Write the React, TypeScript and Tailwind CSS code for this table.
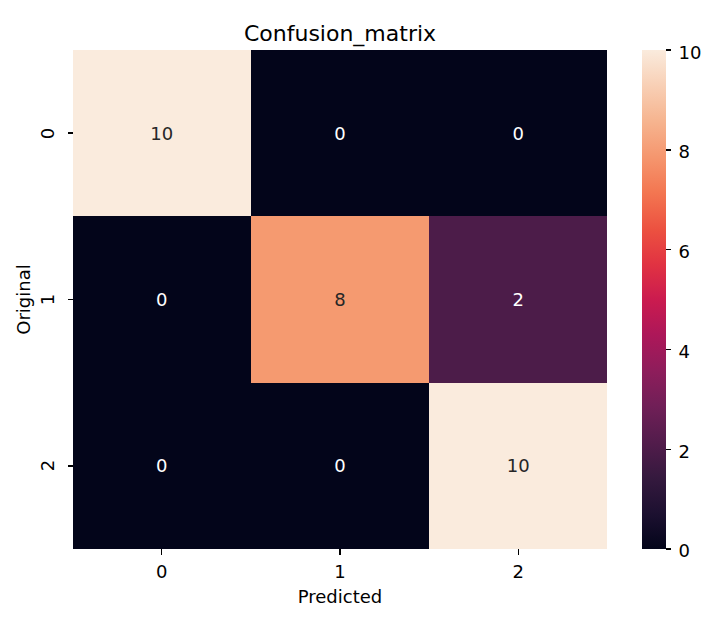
const matrix = [
  [10, 0, 0],
  [0, 8, 2],
  [0, 0, 10],
];

// rocket colormap, sampled
const cellStyle: Record<number, string> = {
  0: 'bg-[#03051a] text-white',
  2: 'bg-[#4c1c49] text-white',
  8: 'bg-[#f59a70] text-[#262626]',
  10: 'bg-[#faebdd] text-[#262626]',
};

const cbarTicks = ['10', '8', '6', '4', '2', '0'];

export default function App() {
  return (
    <div className="w-[713px] h-[618px] bg-white text-black font-['DejaVu_Sans',sans-serif] overflow-hidden">
      {/* Title */}
      <div className="h-[50px] pl-[72.5px]">
        <div className="w-[535px] pt-[21px] text-center text-[22px] leading-[26px]">Confusion_matrix</div>
      </div>

      {/* Main row */}
      <div className="flex h-[499px]">
        {/* y label + ticks */}
        <div className="flex w-[72.5px] shrink-0">
          <div className="w-[34px] pl-[12px] flex items-center justify-center">
            <span className="-rotate-90 whitespace-nowrap text-[18px] leading-[21px]">Original</span>
          </div>
          <div className="w-[28px] grid grid-rows-3">
            {['0', '1', '2'].map((t) => (
              <div key={t} className="flex items-center justify-center">
                <span className="-rotate-90 text-[18px] leading-[21px]">{t}</span>
              </div>
            ))}
          </div>
          <div className="w-[10.5px] grid grid-rows-3">
            {[0, 1, 2].map((i) => (
              <div key={i} className="flex items-center justify-end">
                <div className="w-[5px] h-[1.4px] bg-black" />
              </div>
            ))}
          </div>
        </div>

        {/* Heatmap */}
        <div className="w-[535px] h-full grid grid-cols-3 grid-rows-3 shrink-0">
          {matrix.flat().map((v, i) => (
            <div key={i} className={`flex items-center justify-center text-[18px] leading-[21px] ${cellStyle[v]}`}>
              {v}
            </div>
          ))}
        </div>

        <div className="w-[34px] shrink-0" />

        {/* Colorbar */}
        <div className="w-[24px] h-full shrink-0 bg-[linear-gradient(to_top,#03051a_0%,#1c1030_7%,#35193e_14.3%,#511c4b_21%,#701f57_28.6%,#8e1d5b_35.7%,#ad1759_42.9%,#cb1b4f_50%,#e13342_57.1%,#ec5140_64%,#f37651_71.4%,#f5966e_78.5%,#f6b48f_85.7%,#f8d0b6_93%,#faebdd_100%)]" />

        {/* Colorbar ticks */}
        <div className="h-full flex flex-col justify-between">
          {cbarTicks.map((t) => (
            <div key={t} className="h-0 flex items-center">
              <div className="w-[5px] h-[1.4px] bg-black" />
              <span className="ml-[8px] mt-[4px] text-[18px] leading-[21px]">{t}</span>
            </div>
          ))}
        </div>
      </div>

      {/* x ticks + label */}
      <div className="pl-[72.5px]">
        <div className="w-[535px] grid grid-cols-3">
          {['0', '1', '2'].map((t) => (
            <div key={t} className="flex flex-col items-center">
              <div className="w-[1.4px] h-[5.5px] bg-black" />
              <span className="mt-[6px] text-[18px] leading-[21px]">{t}</span>
            </div>
          ))}
        </div>
        <div className="w-[535px] mt-[4px] text-center text-[18px] leading-[21px]">Predicted</div>
      </div>
    </div>
  );
}
